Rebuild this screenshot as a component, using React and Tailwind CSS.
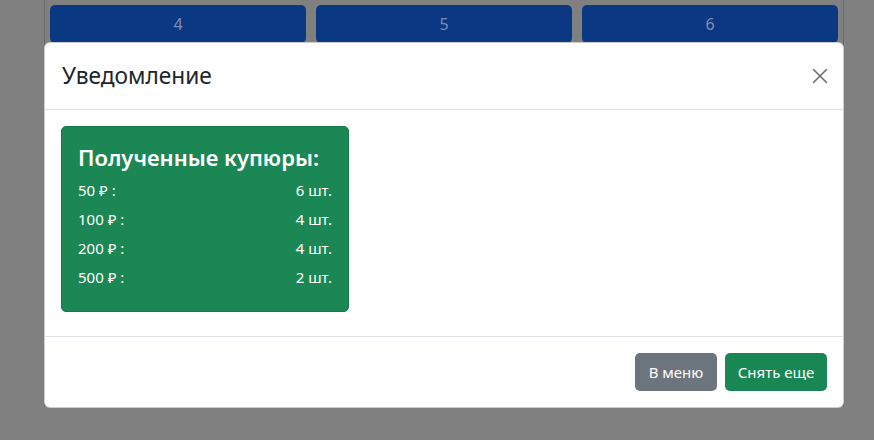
import React from "react";
import { X } from "lucide-react";

const bills = [
  { value: "50 ₽ :", count: "6 шт." },
  { value: "100 ₽ :", count: "4 шт." },
  { value: "200 ₽ :", count: "4 шт." },
  { value: "500 ₽ :", count: "2 шт." },
];

const App = () => {
  return (
    <div
      className="relative h-[440px] w-[874px] overflow-hidden bg-[#808080]"
      style={{ fontFamily: '"Noto Sans", "Open Sans", sans-serif' }}
    >
      {/* Page behind the backdrop */}
      <div className="ml-[44px] h-[407px] w-[800px] border-x border-[#6a6a6a] px-[5px] pt-[5px]">
        <div className="grid grid-cols-3 gap-[10px]">
          {[4, 5, 6].map((n) => (
            <div
              key={n}
              className="flex h-[38px] items-center justify-center rounded-[5px] bg-[#0a3882] text-[16px] text-[#7f8eb0]"
            >
              {n}
            </div>
          ))}
        </div>
      </div>

      {/* Modal */}
      <div className="absolute left-[44px] top-[42px] w-[800px] rounded-[6px] border border-black/20 bg-white text-[#212529]">
        {/* Header */}
        <div className="flex h-[67px] items-center justify-between border-b border-[#dee2e6] pl-[17px] pr-[7px]">
          <h5 className="text-[22.7px] leading-none">Уведомление</h5>
          <button className="flex h-8 w-8 items-center justify-center text-[#6b6b6b]">
            <X size={26} strokeWidth={1.5} />
          </button>
        </div>

        {/* Body */}
        <div className="h-[226px] px-[16px] pt-[16px]">
          <div className="w-[288px] rounded-[5px] border border-[#17794a] bg-[#1b8754] px-[16px] pt-[16px] pb-[19px] text-white">
            <h4 className="flex h-[33px] items-start pt-[1px] text-[22px] font-semibold leading-[26px]">
              Полученные купюры:
            </h4>
            {bills.map((b) => (
              <div key={b.value} className="flex h-[29px] items-center justify-between text-[15px]">
                <span>{b.value}</span>
                <span>{b.count}</span>
              </div>
            ))}
          </div>
        </div>

        {/* Footer */}
        <div className="flex items-center justify-end gap-2 border-t border-[#dee2e6] px-[16px] py-[16px]">
          <button className="h-[38px] w-[82px] rounded-[5px] bg-[#6c757d] text-[15px] text-white">
            В меню
          </button>
          <button className="h-[38px] w-[102px] rounded-[5px] bg-[#198754] text-[15px] text-white">
            Снять еще
          </button>
        </div>
      </div>
    </div>
  );
};

export default App;
